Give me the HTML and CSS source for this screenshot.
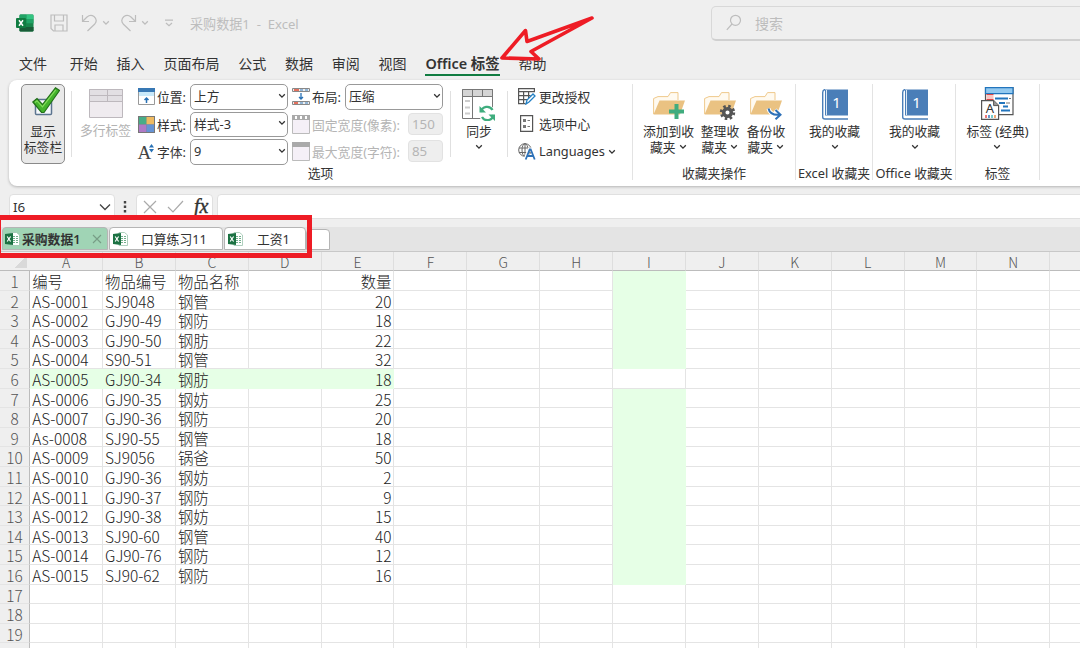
FILE: index.html
```
<!DOCTYPE html>
<html lang="zh-CN">
<head>
    <meta charset="UTF-8">
    <meta name="viewport" content="width=device-width, initial-scale=1.0">
    <title>采购数据1 - Excel</title>
    <link rel="stylesheet" href="styles.css">
</head>
<body>
    <svg class="defs" width="0" height="0">
        <symbol id="chev" viewBox="0 0 8 6"><path d="M1.2 1.3 4 4.1 6.8 1.3" fill="none" stroke="currentColor" stroke-width="1.3"/></symbol>
        <symbol id="folder" viewBox="0 0 32 28">
            <path d="M.6 22V6.500L5 4.600h10L17.500.6H25V8" fill="#fffaf0" stroke="#efc98c"/>
            <path d="M.5 22.500 6.500 8.500H32L27 22.500z" fill="#eac282"/>
        </symbol>
        <symbol id="book" viewBox="0 0 26 31">
            <path d="M3 .5h23v26H3z" fill="#4a7eb8"/>
            <path d="M3 .5Q.7 1 .7 3.500V28q0 2 2.300 2h23" fill="none" stroke="#4a7eb8" stroke-width="1.400"/>
            <path d="M4.500 1v25" stroke="#dce8f5"/>
        </symbol>
        <symbol id="xlfile" viewBox="0 0 15 14">
            <path d="M6 .5h5.500L14.500 3v10.500H6z" fill="#fff" stroke="#9bc4ad" stroke-width=".8"/>
            <path d="M8 4.500h5M8 6.500h5M8 8.500h5M8 10.500h5" stroke="#72ae8b" stroke-dasharray="2 1"/>
            <path d="M0 2 8 1v12L0 12z" fill="#1c7243"/>
            <path d="m2.200 4.500 3.400 5M5.600 4.500l-3.400 5" stroke="#fff" stroke-width="1.200"/>
        </symbol>
    </svg>

    <div class="title-bar">
        <svg class="logo" width="18" height="18" viewBox="0 0 18 18">
            <rect x="3.500" y=".5" width="14" height="17" rx="1.200" fill="#18854b"/>
            <path d="M3.500 1.700Q3.500.5 4.700.5H10.500V5h-7z" fill="#21a366"/>
            <path d="M10.500.5h5.800q1.200 0 1.200 1.200V5h-7z" fill="#33c481"/>
            <path d="M10.500 5h7v4.300h-7z" fill="#21a366"/>
            <path d="M3.500 13h14v3.300q0 1.200-1.200 1.200H4.700q-1.200 0-1.200-1.200z" fill="#185c37"/>
            <rect y="4" width="10" height="10" rx="1" fill="#107c41"/>
            <path d="m3 6.300 4 5.400M7 6.300l-4 5.400" stroke="#fff" stroke-width="1.500"/>
        </svg>
        <svg class="save" width="18" height="18" viewBox="0 0 18 18" fill="none" stroke="currentColor" stroke-width="1.200"><path d="M1 1h16v16H3.500L1 14.500zM4.500 1v6h9V1M5 17v-6h8v6"/></svg>
        <svg class="undo" width="17" height="18" viewBox="0 0 17 18" fill="none" stroke="currentColor" stroke-width="1.200"><path d="M1.500 1v6.500H8M1.500 7.500 6 3q3.500-3 7-.5 4 3.500.8 7.500L6.500 17"/></svg>
        <svg class="chev" width="8" height="6"><use href="#chev"/></svg>
        <svg class="redo" width="17" height="18" viewBox="0 0 17 18" fill="none" stroke="currentColor" stroke-width="1.200"><path d="M15.500 1v6.500H9M15.500 7.500 11 3Q7.500 0 4 2.500 0 6 3.200 10l7.300 7"/></svg>
        <svg class="chev" width="8" height="6"><use href="#chev"/></svg>
        <svg class="custom" width="10" height="8" viewBox="0 0 10 8" fill="none" stroke="currentColor" stroke-width="1.200"><path d="M1 1.200h8M2 4l3 2.800L8 4"/></svg>
        <span class="doc-name">采购数据1&nbsp; -&nbsp; Excel</span>
        <div class="search">
            <svg width="16" height="17" viewBox="0 0 16 17" fill="none" stroke="currentColor" stroke-width="1.200"><circle cx="9.500" cy="6.300" r="5"/><path d="M6 10 .8 15.800"/></svg>
            <span>搜索</span>
        </div>
    </div>

    <div class="menu">
        <span class="file">文件</span><span>开始</span><span>插入</span><span>页面布局</span><span>公式</span><span>数据</span><span>审阅</span><span>视图</span><span class="active">Office 标签</span><span>帮助</span>
    </div>

    <div class="ribbon">
        <div class="group options">
            <div class="group-body">
                <div class="toggle">
                    <svg width="28" height="29" viewBox="0 0 28 29">
                        <rect x="3.500" y="12.500" width="16" height="15" rx="1" fill="#f5f8fc" stroke="#5c7590" stroke-width="1.500"/>
                        <path d="M.8 15 5 11.500 10.500 17.500 23.500.8 27.500 3.500 12 25.500H9.500z" fill="#43b32b" stroke="#24701a" stroke-width="1.200"/>
                        <path d="M3 15.500 5 13.800 10.500 19.800 23.700 2.800" fill="none" stroke="#83dc5b" stroke-width="1.200"/>
                    </svg>
                    <span>显示<br>标签栏</span>
                </div>
                <i class="sep"></i>
                <div class="big multi">
                    <svg width="34" height="29" viewBox="0 0 34 29" fill="#efebef" stroke="#bdb8bd"><path d="M.5.500h33v28H.5z"/><path d="M.5.500h33v12H.5z" fill="#e2dfe3"/><path d="M.5 6.500h33M.5 12.500h33M18.500.5v12"/></svg>
                    <span>多行标签</span>
                </div>
                <div class="fields place-fields">
                    <div class="field">
                        <svg width="17" height="17" viewBox="0 0 17 17"><path d="M.5.500h16v16H.5z" fill="#fff" stroke="#999"/><path d="M0 0h17v4H0z" fill="#3878b4"/><path d="M1 4h15v4H1z" fill="#c9e9fa"/><path d="M8.500 15v-5M6.500 12l2-2 2 2" fill="none" stroke="#2871b5" stroke-width="1.500"/></svg>
                        <label>位置:</label>
                        <div class="select">上方<svg width="8" height="6"><use href="#chev"/></svg></div>
                    </div>
                    <div class="field">
                        <svg width="17" height="17" viewBox="0 0 17 17"><path d="M0 0h17v17H0z" fill="#777"/><path d="M1 1h7.500v7.500H1z" fill="#48ad87"/><path d="M8.500 1H16v7.500H8.500z" fill="#efba61"/><path d="M1 8.500h7.500V16H1z" fill="#af7ac6"/><path d="M8.500 8.500H16V16H8.500z" fill="#6693d4"/></svg>
                        <label>样式:</label>
                        <div class="select">样式-3<svg width="8" height="6"><use href="#chev"/></svg></div>
                    </div>
                    <div class="field">
                        <svg class="font-icon" width="17" height="17" viewBox="0 0 17 17"><text class="font-a" x="-.5" y="15.500">A</text><path d="M11 4.500 13.500 1 16 4.500zM11 6 13.500 9.500 16 6z" fill="#2871b5"/></svg>
                        <label>字体:</label>
                        <div class="select">9<svg width="8" height="6"><use href="#chev"/></svg></div>
                    </div>
                </div>
                <div class="fields layout-fields">
                    <div class="field">
                        <svg width="18" height="17" viewBox="0 0 18 17"><path d="M.5.500h17v3H.5zM.5 13.500h17v3H.5z" fill="#eee" stroke="#888"/><path d="M2 2h5M2 15h4" stroke="#e0482f" stroke-width="1.500"/><path d="M8 2h3M13 2h3M8 15h3M13 15h3" stroke="#76a3cd" stroke-width="1.500"/><path d="M9 5v6M7 9l2 2 2-2" fill="none" stroke="#2871b5" stroke-width="1.300"/></svg>
                        <label>布局:</label>
                        <div class="select">压缩<svg width="8" height="6"><use href="#chev"/></svg></div>
                    </div>
                    <div class="field off">
                        <svg width="18" height="19" viewBox="0 0 18 19"><path d="M.5.500h17v18H.5z" fill="#f5f0f7" stroke="#bbb"/><path d="M0 0h18v5H0z" fill="#aaa"/><path d="M3 1h2v3H3zM8 1h2v3H8zM13 1h2v3h-2z" fill="#fff"/></svg>
                        <label>固定宽度(像素):</label>
                        <div class="input">150</div>
                    </div>
                    <div class="field off">
                        <svg width="18" height="19" viewBox="0 0 18 19"><path d="M.5.500h17v18H.5z" fill="#f5f0f7" stroke="#bbb"/><path d="M0 0h18v5H0z" fill="#aaa"/></svg>
                        <label>最大宽度(字符):</label>
                        <div class="input">85</div>
                    </div>
                </div>
                <i class="sep"></i>
                <div class="big sync">
                    <svg width="34" height="32" viewBox="0 0 34 32">
                        <path d="M.5.500h30v29H.5z" fill="#fff" stroke="#777"/><path d="M.5.500h30v7H.5z" fill="#d5d5d5" stroke="#777"/><path d="M10.500.5v29M20.500.5v7" stroke="#777"/><path d="M3 12h5M3 18.500h5M3 24.500h5" stroke="#ccc" stroke-width="2"/>
                        <circle cx="25" cy="24.500" r="8.500" fill="#fff"/>
                        <path d="M19 23a6.200 6.200 0 0 1 11.500-2M31.500 26a6.200 6.200 0 0 1-11.500 2" fill="none" stroke="#3fad7e" stroke-width="2.300"/><path d="M17.500 17v6.500H24zM33 32v-6.500h-6.500z" fill="#3fad7e"/>
                    </svg>
                    <span>同步</span>
                    <svg class="drop" width="8" height="6"><use href="#chev"/></svg>
                </div>
                <i class="sep"></i>
                <div class="links">
                    <div><svg width="18" height="17" viewBox="0 0 18 17"><path d="M.6.6h15.800v3H.6zM.6 3.600v12h7M.6 7.600h12M.6 11.600h9M5.600 3.600v12M10.600 3.600v7" fill="none" stroke="#555" stroke-width="1.200"/><path d="m8 16 1-4 6-6 2 2-6 6z" fill="#fff" stroke="#2380c4" stroke-width="1.300"/></svg>更改授权</div>
                    <div><svg width="18" height="17" viewBox="0 0 18 17"><path d="M2.600.6h12v15.800h-12z" fill="#fff" stroke="#555" stroke-width="1.200"/><path d="M5 4h3v3H5zM5 10h3v3H5z" fill="#777"/><path d="M9.500 5.500H12M9.500 11.500H12" stroke="#777"/></svg>选项中心</div>
                    <div><svg width="18" height="17" viewBox="0 0 18 17"><g fill="none" stroke="#666"><circle cx="7" cy="7" r="6.300"/><ellipse cx="7" cy="7" rx="3" ry="6.300"/><path d="M7 .7v12.600M1 5h12M1 9.500h12"/></g><path d="m7 16.500 4-10.500h2l4 10.500M9 13h6" fill="none" stroke="#fff" stroke-width="3"/><path d="m7.700 16.500 4-10h1l4 10M9 13h6" fill="none" stroke="#2e72b8" stroke-width="1.800"/></svg>Languages<svg class="drop" width="8" height="6"><use href="#chev"/></svg></div>
                </div>
            </div>
            <div class="caption">选项</div>
        </div>

        <div class="group favs">
            <div class="group-body">
                <div class="big">
                    <svg width="32" height="28"><use href="#folder"/><path d="M16 19.500h15M23.500 12v15" stroke="#40ac7e" stroke-width="4"/></svg>
                    <span>添加到收<br>藏夹 <svg width="8" height="6"><use href="#chev"/></svg></span>
                </div>
                <div class="big">
                    <svg width="32" height="28"><use href="#folder"/><circle cx="23.500" cy="20.500" r="6.200" fill="none" stroke="#555" stroke-width="3" stroke-dasharray="2.430 2.430"/><circle cx="23.500" cy="20.500" r="3.800" fill="#fff" stroke="#555" stroke-width="3.500"/></svg>
                    <span>整理收<br>藏夹 <svg width="8" height="6"><use href="#chev"/></svg></span>
                </div>
                <div class="big">
                    <svg width="32" height="28"><use href="#folder"/><path d="M18.500 16.500q1.500 7 11 6.200M25 18l5 4.700-5 4.600" fill="none" stroke="#fff" stroke-width="4"/><path d="M18.500 16.500q1.500 7 11 6.200M25.500 18l5 4.700-5 4.600" fill="none" stroke="#2d70b7" stroke-width="2"/></svg>
                    <span>备份收<br>藏夹 <svg width="8" height="6"><use href="#chev"/></svg></span>
                </div>
            </div>
            <div class="caption">收藏夹操作</div>
        </div>

        <div class="group excel-fav">
            <div class="group-body">
                <div class="big">
                    <svg width="26" height="31"><use href="#book"/><text class="book-no" x="14.500" y="19">1</text></svg>
                    <span>我的收藏</span>
                    <svg class="drop" width="8" height="6"><use href="#chev"/></svg>
                </div>
            </div>
            <div class="caption">Excel 收藏夹</div>
        </div>

        <div class="group office-fav">
            <div class="group-body">
                <div class="big">
                    <svg width="26" height="31"><use href="#book"/><text class="book-no" x="14.500" y="19">1</text></svg>
                    <span>我的收藏</span>
                    <svg class="drop" width="8" height="6"><use href="#chev"/></svg>
                </div>
            </div>
            <div class="caption">Office 收藏夹</div>
        </div>

        <div class="group classic">
            <div class="group-body">
                <div class="big">
                    <svg width="33" height="33" viewBox="0 0 33 33">
                        <path d="M4.500.600h27.500v27H4.500z" fill="#fff" stroke="#555" stroke-width="1.200"/><path d="M4.500.600h27.500v6H4.500z" fill="#93c9ef" stroke="#2275bd" stroke-width="1.200"/>
                        <path d="M5.500 8h7v5h-7z" fill="#f8c7c5"/><path d="M5.500 7.500h7M5.500 12.500h7" stroke="#dc4848"/>
                        <path d="M14 11.500h13M18 16h6M22 19.500h5M20 23.500h9" stroke="#2275bd" stroke-width="2"/><path d="M25 16h4M28 11.500h2" stroke="#777"/>
                        <path d="M.6 13.600h12l5 5v13.800H.6z" fill="#fff" stroke="#555" stroke-width="1.200"/><path d="M12.600 13.600v5h5" fill="#999" stroke="#555"/>
                        <text class="page-a" x="9" y="26">A</text>
                        <path d="M4 29.500h2" stroke="#e77" stroke-width="3"/><path d="M7 29.500h2" stroke="#69c" stroke-width="3"/><path d="M10 29.500h2" stroke="#7cc" stroke-width="3"/><path d="M13 29.500h2" stroke="#ea7" stroke-width="3"/>
                    </svg>
                    <span>标签 (经典)</span>
                    <svg class="drop" width="8" height="6"><use href="#chev"/></svg>
                </div>
            </div>
            <div class="caption">标签</div>
        </div>
    </div>

    <div class="formula-bar">
        <div class="name-box">I6<svg width="12" height="8" viewBox="0 0 12 8"><path d="m1 1.500 5 5 5-5" fill="none" stroke="#444" stroke-width="1.300"/></svg></div>
        <svg class="dots" width="4" height="14" viewBox="0 0 4 14" fill="#444"><path d="M.8 1h2.400v2.400H.8zM.8 5.500h2.400v2.400H.8zM.8 10h2.400v2.400H.8z"/></svg>
        <div class="fx-box">
            <svg width="14" height="14" viewBox="0 0 14 14"><path d="m1 1 12 12M13 1 1 13" stroke="#aaa" stroke-width="1.200"/></svg>
            <svg width="17" height="13" viewBox="0 0 17 13"><path d="m1 7 5 5L16 1" fill="none" stroke="#aaa" stroke-width="1.200"/></svg>
            <span>fx</span>
        </div>
        <div class="formula-input"></div>
    </div>

    <div class="tab-bar">
        <div class="tab current"><svg width="15" height="14"><use href="#xlfile"/></svg><span>采购数据1</span><svg class="close" width="10" height="10" viewBox="0 0 10 10"><path d="m1 1 8 8M9 1 1 9" stroke="#779d86" stroke-width="1.100"/></svg></div>
        <div class="tab second"><svg width="15" height="14"><use href="#xlfile"/></svg><span>口算练习11</span></div>
        <div class="tab third"><svg width="15" height="14"><use href="#xlfile"/></svg><span>工资1</span></div>
        <div class="tab new"></div>
    </div>

    <div class="sheet" id="sheet"></div>

    <div class="red-box"></div>
    <svg class="arrow" width="110" height="60" viewBox="0 0 110 60"><path d="M93 8 28 31.500 26.500 20.500 3 48 40 49 32 41.500z" fill="none" stroke="#ee1c25" stroke-width="3.600" stroke-linejoin="round"/></svg>

    <script>
        const columns = 'ABCDEFGHIJKLMNO'.split('');
        const rows = [
            ['编号', '物品编号', '物品名称', '数量'],
            ['AS-0001', 'SJ9048', '钢管', 20],
            ['AS-0002', 'GJ90-49', '钢防', 18],
            ['AS-0003', 'GJ90-50', '钢肪', 22],
            ['AS-0004', 'S90-51', '钢管', 32],
            ['AS-0005', 'GJ90-34', '钢肪', 18],
            ['AS-0006', 'GJ90-35', '钢妨', 25],
            ['AS-0007', 'GJ90-36', '钢防', 20],
            ['As-0008', 'SJ90-55', '钢管', 18],
            ['AS-0009', 'SJ9056', '锅爸', 50],
            ['AS-0010', 'GJ90-36', '钢妨', 2],
            ['AS-0011', 'GJ90-37', '钢防', 9],
            ['AS-0012', 'GJ90-38', '钢妨', 15],
            ['AS-0013', 'SJ90-60', '钢管', 40],
            ['AS-0014', 'GJ90-76', '钢防', 12],
            ['AS-0015', 'SJ90-62', '钢防', 16]
        ];
        const selected = { row: 6, col: 8 };
        const sheet = document.getElementById('sheet');

        function addCell(className, text) {
            const cell = document.createElement('div');
            cell.className = className;
            cell.textContent = text;
            sheet.appendChild(cell);
        }

        // En-têtes de colonnes
        addCell('corner', '');
        columns.forEach(name => addCell('col-head', name === 'O' ? '' : name));

        for (let r = 1; r <= 20; r++) {
            addCell('row-head', r < 20 ? r : '');
            const data = rows[r - 1] || [];
            columns.forEach((name, c) => {
                let text = '';
                if (c < 3) text = data[c] || '';
                if (c === 4) text = data[3] || '';

                // Surligne la ligne et la colonne de la cellule active
                const inRow = r === selected.row && c < 5;
                const inCol = c === selected.col && r <= rows.length && r !== selected.row;
                let className = 'cell';
                if (c === 4) className += ' number';
                if (inRow || inCol) className += ' lit';
                addCell(className, text);
            });
        }
    </script>
</body>
</html>
```
FILE: styles.css
```
* {
    margin: 0;
    padding: 0;
    box-sizing: border-box;
}

body {
    width: 1080px;
    height: 648px;
    overflow: hidden;
    position: relative;
    background-color: #efefef;
    color: #333;
    font-family: "Noto Sans", "Noto Sans CJK SC", sans-serif;
    font-size: 12.8px;
}

svg {
    flex: none;
    display: block;
}

.defs {
    position: absolute;
}

/* Barre de titre */
.title-bar {
    display: flex;
    align-items: center;
    height: 46px;
    padding-left: 16px;
    color: #bdbdbd;
}

.save { margin-left: 16px; }
.undo { margin-left: 13px; }
.redo { margin-left: 10px; }
.chev { margin-left: 4px; }
.custom { margin-left: 15px; }

.doc-name {
    flex: none;
    margin-left: 16px;
    width: 521px;
    white-space: pre;
    font-size: 13.1px;
    color: #bdbdbd;
}

.search {
    flex: none;
    display: flex;
    align-items: center;
    gap: 13px;
    width: 380px;
    height: 35px;
    padding-left: 14px;
    border: 1px solid #d8d8d8;
    border-bottom: 2px solid #d0d0d0;
    border-radius: 5px;
    font-size: 14px;
}

.menu {
    display: flex;
    gap: 18.8px;
    height: 34px;
    padding: 8px 0 0 19px;
    font-size: 14px;
    line-height: 20px;
    white-space: nowrap;
}

.menu .file {
    margin-right: 4px;
}

.menu .active {
    height: 22px;
    font-size: 14.4px;
    font-weight: 600;
    border-bottom: 2px solid #107c41;
}

/* Ruban */
.ribbon {
    display: flex;
    width: 1090px;
    height: 106px;
    margin-left: 9px;
    padding-top: 4px;
    background-color: white;
    border-radius: 8px;
    box-shadow: 0 1px 3px rgba(0,0,0,0.25);
}

.group {
    flex: none;
    height: 96px;
    border-right: 1px solid #e3e3e3;
}

.group-body {
    display: flex;
    height: 80px;
    justify-content: center;
}

.group-body > * {
    flex: none;
}

.caption {
    height: 18px;
    line-height: 18px;
    text-align: center;
    white-space: nowrap;
}

.options { width: 624px; }
.favs { width: 163px; }
.excel-fav { width: 77px; }
.office-fav { width: 83px; }
.classic { width: 84px; }

.options .group-body {
    justify-content: flex-start;
    padding-left: 12px;
}

.toggle {
    width: 44px;
    height: 80px;
    padding-top: 2px;
    border: 1px solid #8a8a8a;
    border-radius: 5px;
    background-color: #e9e9e9;
    text-align: center;
    line-height: 16px;
}

.toggle svg {
    margin: 0 auto 7px 10px;
}

.sep {
    width: 1px;
    height: 66px;
    margin: 7px 0 0;
    background-color: #e0e0e0;
}

.toggle + .sep { margin-left: 6px; }

.big {
    display: flex;
    flex-direction: column;
    align-items: center;
    padding-top: 5px;
    line-height: 16px;
    white-space: nowrap;
}

.big span {
    margin-top: 3px;
}

.drop {
    margin-top: 5px;
}

.multi {
    width: 51px;
    margin-left: 8px;
    color: #b3b3b3;
}

.multi span {
    margin-top: 4px;
}

.sync {
    width: 34px;
    margin-left: 11px;
}

.sync span {
    margin-top: 2px;
}

.sync + .sep {
    margin-left: 11px;
}

.fields {
    display: flex;
    flex-direction: column;
    gap: 2px;
}

.place-fields {
    width: 150px;
    margin-left: 7px;
}

.layout-fields {
    width: 151px;
    margin: 0 7px 0 4px;
}

.field {
    display: flex;
    align-items: center;
    justify-content: space-between;
    height: 25.5px;
    white-space: nowrap;
}

.field label {
    flex: 1;
    margin-left: 2px;
}

.off {
    color: #b5b5b5;
}

.select {
    display: flex;
    align-items: center;
    justify-content: space-between;
    width: 98px;
    height: 25.5px;
    padding: 0 1px 2px 3px;
    border: 1px solid #999;
    border-radius: 5px;
}

.input {
    width: 35px;
    height: 22px;
    padding-left: 3px;
    font-size: 13.3px;
    line-height: 20px;
    border: 1px solid #e2e2e2;
    border-radius: 4px;
    background-color: #eee;
}

.font-icon {
    overflow: visible;
}

.font-a {
    font-family: "Liberation Serif", serif;
    font-size: 19px;
    line-height: 17px;
    fill: #444;
}

.links {
    display: flex;
    flex-direction: column;
    gap: 2px;
    margin-left: 10px;
}

.links div {
    display: flex;
    align-items: center;
    gap: 3px;
    height: 25.5px;
}

.links .drop {
    margin: 1px 0 0;
}

.favs .group-body {
    justify-content: flex-start;
    padding-left: 10px;
}

.favs .big {
    width: 51px;
    padding-top: 8px;
}

.favs .big:nth-child(2) {
    width: 52px;
}

.favs .big:nth-child(3) {
    width: 40px;
}

.favs span {
    text-align: center;
}

.favs span svg {
    display: inline-block;
    vertical-align: 2px;
}

.book-no {
    font-size: 15px;
    fill: white;
    text-anchor: middle;
}

.excel-fav .big,
.office-fav .big {
    margin-left: 1px;
}

.classic .big {
    padding-top: 3px;
}

.page-a {
    font-size: 13px;
    fill: #333;
    text-anchor: middle;
}

/* Barre de formule */
.formula-bar {
    display: flex;
    align-items: flex-start;
    height: 41px;
    padding: 8px 0 0 9px;
}

.name-box,
.fx-box,
.formula-input {
    flex: none;
    height: 25px;
    border: 1px solid #e0e0e0;
    border-radius: 4px;
    background-color: white;
}

.name-box {
    display: flex;
    align-items: center;
    justify-content: space-between;
    width: 106px;
    padding: 0 3px;
    font-size: 13.4px;
}

.dots {
    margin: 6px 9px 0 8px;
}

.fx-box {
    display: flex;
    align-items: center;
    gap: 10px;
    width: 77px;
    padding-left: 6px;
}

.fx-box span {
    font: italic 20px "Liberation Serif", serif;
    -webkit-text-stroke: 0.4px #333;
}

.formula-input {
    width: 870px;
    margin-left: 4px;
}

/* Onglets */
.tab-bar {
    display: flex;
    align-items: flex-end;
    height: 25px;
    padding: 0 0 1px 2px;
    background-color: #e4e4e4;
    border-bottom: 1px solid #c8c8c8;
}

.tab {
    display: flex;
    align-items: center;
    height: 23px;
    padding-left: 3px;
    border: 1px solid #b5b5b5;
    border-radius: 4px 4px 0 0;
    background-color: white;
}

.current {
    width: 106px;
    padding-left: 2px;
    background-color: #a0d4b5;
    font-weight: 600;
}

.current span {
    margin-left: 2px;
    width: 70px;
}

.second {
    width: 114px;
    margin-left: 1px;
}

.second span {
    margin-left: 13px;
}

.third {
    width: 82px;
    margin-left: 1px;
}

.third span {
    margin-left: 14px;
}

.new {
    width: 24px;
    height: 21px;
}

/* Feuille */
.sheet {
    display: grid;
    grid-template-columns: 30.2px repeat(15, 72.86px);
    grid-template-rows: 19px;
    grid-auto-rows: 19.6px;
    width: 1130px;
    background-color: white;
    color: #222;
    font-family: "Noto Sans CJK SC", sans-serif;
    font-weight: 300;
    font-size: 15.4px;
}

.corner,
.col-head {
    background-color: #efefef;
    border-bottom: 1px solid #bcbcbc;
}

.corner {
    background-image: linear-gradient(135deg, transparent 50%, #d9d9d9 50%);
    background-size: 13px 13px;
    background-position: 14px 3px;
    background-repeat: no-repeat;
}

.col-head {
    border-right: 1px solid #dedede;
    text-align: center;
    font-size: 14px;
    line-height: 20px;
    color: #555;
}

.row-head {
    background-color: #efefef;
    border-right: 1px solid #bcbcbc;
    border-bottom: 1px solid #e4e4e4;
    text-align: center;
    line-height: 21px;
    color: #555;
}

.cell {
    padding-left: 2px;
    border-right: 1px solid #e4e4e4;
    border-bottom: 1px solid #e4e4e4;
    line-height: 21px;
    white-space: nowrap;
}

.number {
    padding: 0 2px 0 0;
    text-align: right;
}

.lit {
    background-color: #e6ffe6;
    border-color: #e6ffe6;
}

/* Annotations rouges */
.red-box {
    position: absolute;
    left: -4px;
    top: 215px;
    width: 316px;
    height: 43px;
    border: 5px solid #ee1c25;
}

.arrow {
    position: absolute;
    left: 499px;
    top: 10px;
}
```
